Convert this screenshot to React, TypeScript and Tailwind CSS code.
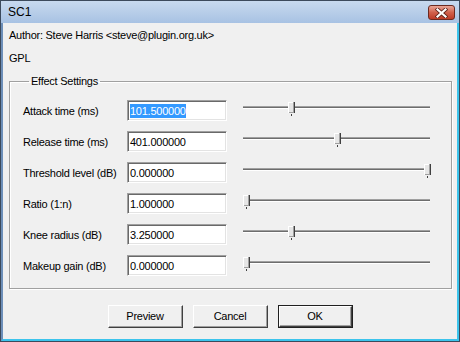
import React from 'react';

const rows = [
  { label: 'Attack time (ms)', value: '101.500000', pos: 48, selected: true },
  { label: 'Release time (ms)', value: '401.000000', pos: 94 },
  { label: 'Threshold level (dB)', value: '0.000000', pos: 184 },
  { label: 'Ratio (1:n)', value: '1.000000', pos: 3 },
  { label: 'Knee radius (dB)', value: '3.250000', pos: 48 },
  { label: 'Makeup gain (dB)', value: '0.000000', pos: 3 },
];

function Thumb({ pos }: { pos: number }) {
  return (
    <svg
      width="7"
      height="15"
      viewBox="0 0 7 15"
      className="absolute top-[2px]"
      style={{ left: pos - 3 }}
      shapeRendering="crispEdges"
    >
      <rect x="0" y="0" width="7" height="11" fill="#e6e6e6" />
      <rect x="0" y="0" width="1" height="11" fill="#ffffff" />
      <rect x="0" y="0" width="7" height="1" fill="#ffffff" />
      <rect x="5" y="0" width="1" height="11" fill="#a0a0a0" />
      <rect x="6" y="0" width="1" height="11" fill="#404040" />
      <rect x="1" y="10" width="5" height="1" fill="#a0a0a0" />
      <rect x="3" y="12" width="1" height="2" fill="#404040" />
    </svg>
  );
}

function Slider({ pos }: { pos: number }) {
  return (
    <div className="relative w-[187px] h-[21px] ml-[16px]">
      <div className="absolute left-0 right-0 top-[6px] h-[3px] bg-[#6d6d6d] border-t border-t-[#a0a0a0] border-b border-b-white" />
      <Thumb pos={pos} />
    </div>
  );
}

function Button({ label, isDefault }: { label: string; isDefault?: boolean }) {
  const inner = (
    <div className="flex items-center justify-center w-full h-full bg-[#f0f0f0] border border-t-white border-l-white border-r-[#404040] border-b-[#404040] shadow-[inset_-1px_-1px_0_#a0a0a0]">
      {label}
    </div>
  );
  if (isDefault) {
    return <div className="w-[75px] h-[23px] border border-[#202020]">{inner}</div>;
  }
  return <div className="w-[75px] h-[23px]">{inner}</div>;
}

export default function App() {
  return (
    <div
      className="w-[460px] h-[342px] flex flex-col bg-[#f0f0f0] text-[11px] tracking-[-0.25px] text-black border border-[#3c4a5c] overflow-hidden"
      style={{ fontFamily: '"Liberation Sans", Arial, sans-serif' }}
    >
      {/* title bar */}
      <div className="h-[22px] flex items-center justify-between pl-[7px] pr-[4px] bg-gradient-to-b from-[#c8daef] to-[#a8c2e3] shrink-0">
        <span className="text-[12px] leading-none tracking-normal">SC1</span>
        <div className="w-[27px] h-[15px] mt-[1px] rounded-[3px] border border-[#6b2a20] bg-gradient-to-b from-[#e8a596] via-[#d0604b] to-[#bd3a26] flex items-center justify-center">
          <svg width="13" height="10" viewBox="0 0 13 10">
            <path d="M2.5 1.5 L10.5 8.5 M10.5 1.5 L2.5 8.5" stroke="#5a2018" strokeWidth="3.8" strokeLinecap="square" />
            <path d="M2.5 1.5 L10.5 8.5 M10.5 1.5 L2.5 8.5" stroke="#ffffff" strokeWidth="2.2" strokeLinecap="square" />
          </svg>
        </div>
      </div>

      {/* client */}
      <div className="flex-1 flex flex-col border-l-2 border-l-[#6d8fb9] border-r-2 border-r-[#3cc4ec] border-b-2 border-b-[#3cc4ec] pl-[6px] pr-[5px]">
        <div className="mt-[6px] leading-[13px]">Author: Steve Harris &lt;steve@plugin.org.uk&gt;</div>
        <div className="mt-[10px] leading-[13px]">GPL</div>

        <fieldset className="mt-[10px] border border-[#a0a0a0] shadow-[inset_1px_1px_0_#fff,1px_1px_0_#fff] pl-[13px] pt-[12px] pb-[12px]">
          <legend className="ml-[6px] px-[2px] leading-[13px]">Effect Settings</legend>
          <div className="flex flex-col gap-[10px]">
            {rows.map((r) => (
              <div key={r.label} className="flex items-center h-[21px]">
                <div className="w-[104px] mt-[1px]">{r.label}</div>
                <div className="w-[100px] h-[21px] bg-white border border-t-[#a0a0a0] border-l-[#a0a0a0] border-r-white border-b-white shadow-[inset_1px_1px_0_#696969,inset_-1px_-1px_0_#e3e3e3] flex items-center pl-[2px]">
                  {r.selected ? (
                    <span className="bg-[#3399ff] text-white leading-[14px]">{r.value}</span>
                  ) : (
                    <span className="leading-[14px]">{r.value}</span>
                  )}
                </div>
                <Slider pos={r.pos} />
              </div>
            ))}
          </div>
        </fieldset>

        <div className="mt-[16px] flex justify-center gap-[10px] pr-[1px]">
          <Button label="Preview" />
          <Button label="Cancel" />
          <Button label="OK" isDefault />
        </div>
      </div>
    </div>
  );
}
